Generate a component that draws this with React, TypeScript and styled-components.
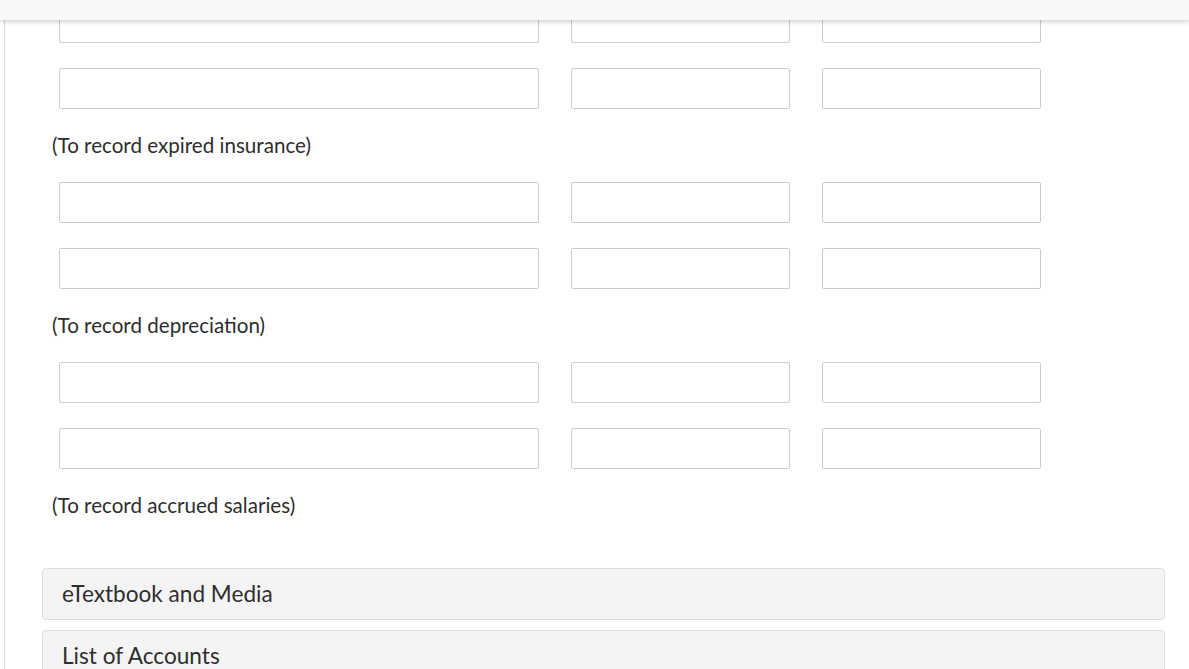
import React from "react";
import styled, { createGlobalStyle } from "styled-components";

const Global = createGlobalStyle`
  html, body { margin: 0; padding: 0; background: #fff; }
  body { font-family: Lato, "Open Sans", sans-serif; color: #333; overflow: hidden; }
  * { box-sizing: border-box; }
`;

const TopBar = styled.div`
  position: fixed;
  top: 0;
  left: 0;
  right: 0;
  height: 20px;
  background: #f8f8f8;
  box-shadow: 0 2px 5px rgba(0, 0, 0, 0.18);
  z-index: 10;
`;

const Page = styled.div`
  margin-left: 4px;
  border-left: 1px solid #dcdcdc;
  min-height: 669px;
  padding-top: 2px;
  display: flex;
  flex-direction: column;
`;

const Entries = styled.div`
  padding-left: 54px;
`;

const Row = styled.div`
  display: flex;
  gap: 32px;
  margin-bottom: 25px;
`;

const Field = styled.input<{ $w: number }>`
  width: ${(p) => p.$w}px;
  height: 41px;
  border: 1px solid #cccccc;
  border-radius: 2px;
  background: #fff;
  padding: 0 8px;
  font: inherit;
  outline: none;
`;

const Note = styled.div`
  margin-left: -7px;
  font-size: 20.6px;
  line-height: 22px;
  padding-bottom: 2px;
  margin-bottom: 24px;
  color: #2e2e2e;
`;

const Panels = styled.div`
  margin: 26px 24px 0 37px;
  display: flex;
  flex-direction: column;
  gap: 10px;
`;

const Panel = styled.div`
  height: 52px;
  flex: none;
  background: #f4f4f4;
  border: 1px solid #dddddd;
  border-radius: 4px;
  padding: 0 19px 2px;
  display: flex;
  align-items: center;
  font-size: 22.6px;
  color: #2e2e2e;
`;

const groups = [
  "(To record expired insurance)",
  "(To record depreciation)",
  "(To record accrued salaries)",
];

function EntryRow() {
  return (
    <Row>
      <Field $w={480} />
      <Field $w={219} />
      <Field $w={219} />
    </Row>
  );
}

export default function App() {
  return (
    <>
      <Global />
      <TopBar />
      <Page>
        <Entries>
          {groups.map((g) => (
            <React.Fragment key={g}>
              <EntryRow />
              <EntryRow />
              <Note>{g}</Note>
            </React.Fragment>
          ))}
        </Entries>
        <Panels>
          <Panel>eTextbook and Media</Panel>
          <Panel>List of Accounts</Panel>
        </Panels>
      </Page>
    </>
  );
}
